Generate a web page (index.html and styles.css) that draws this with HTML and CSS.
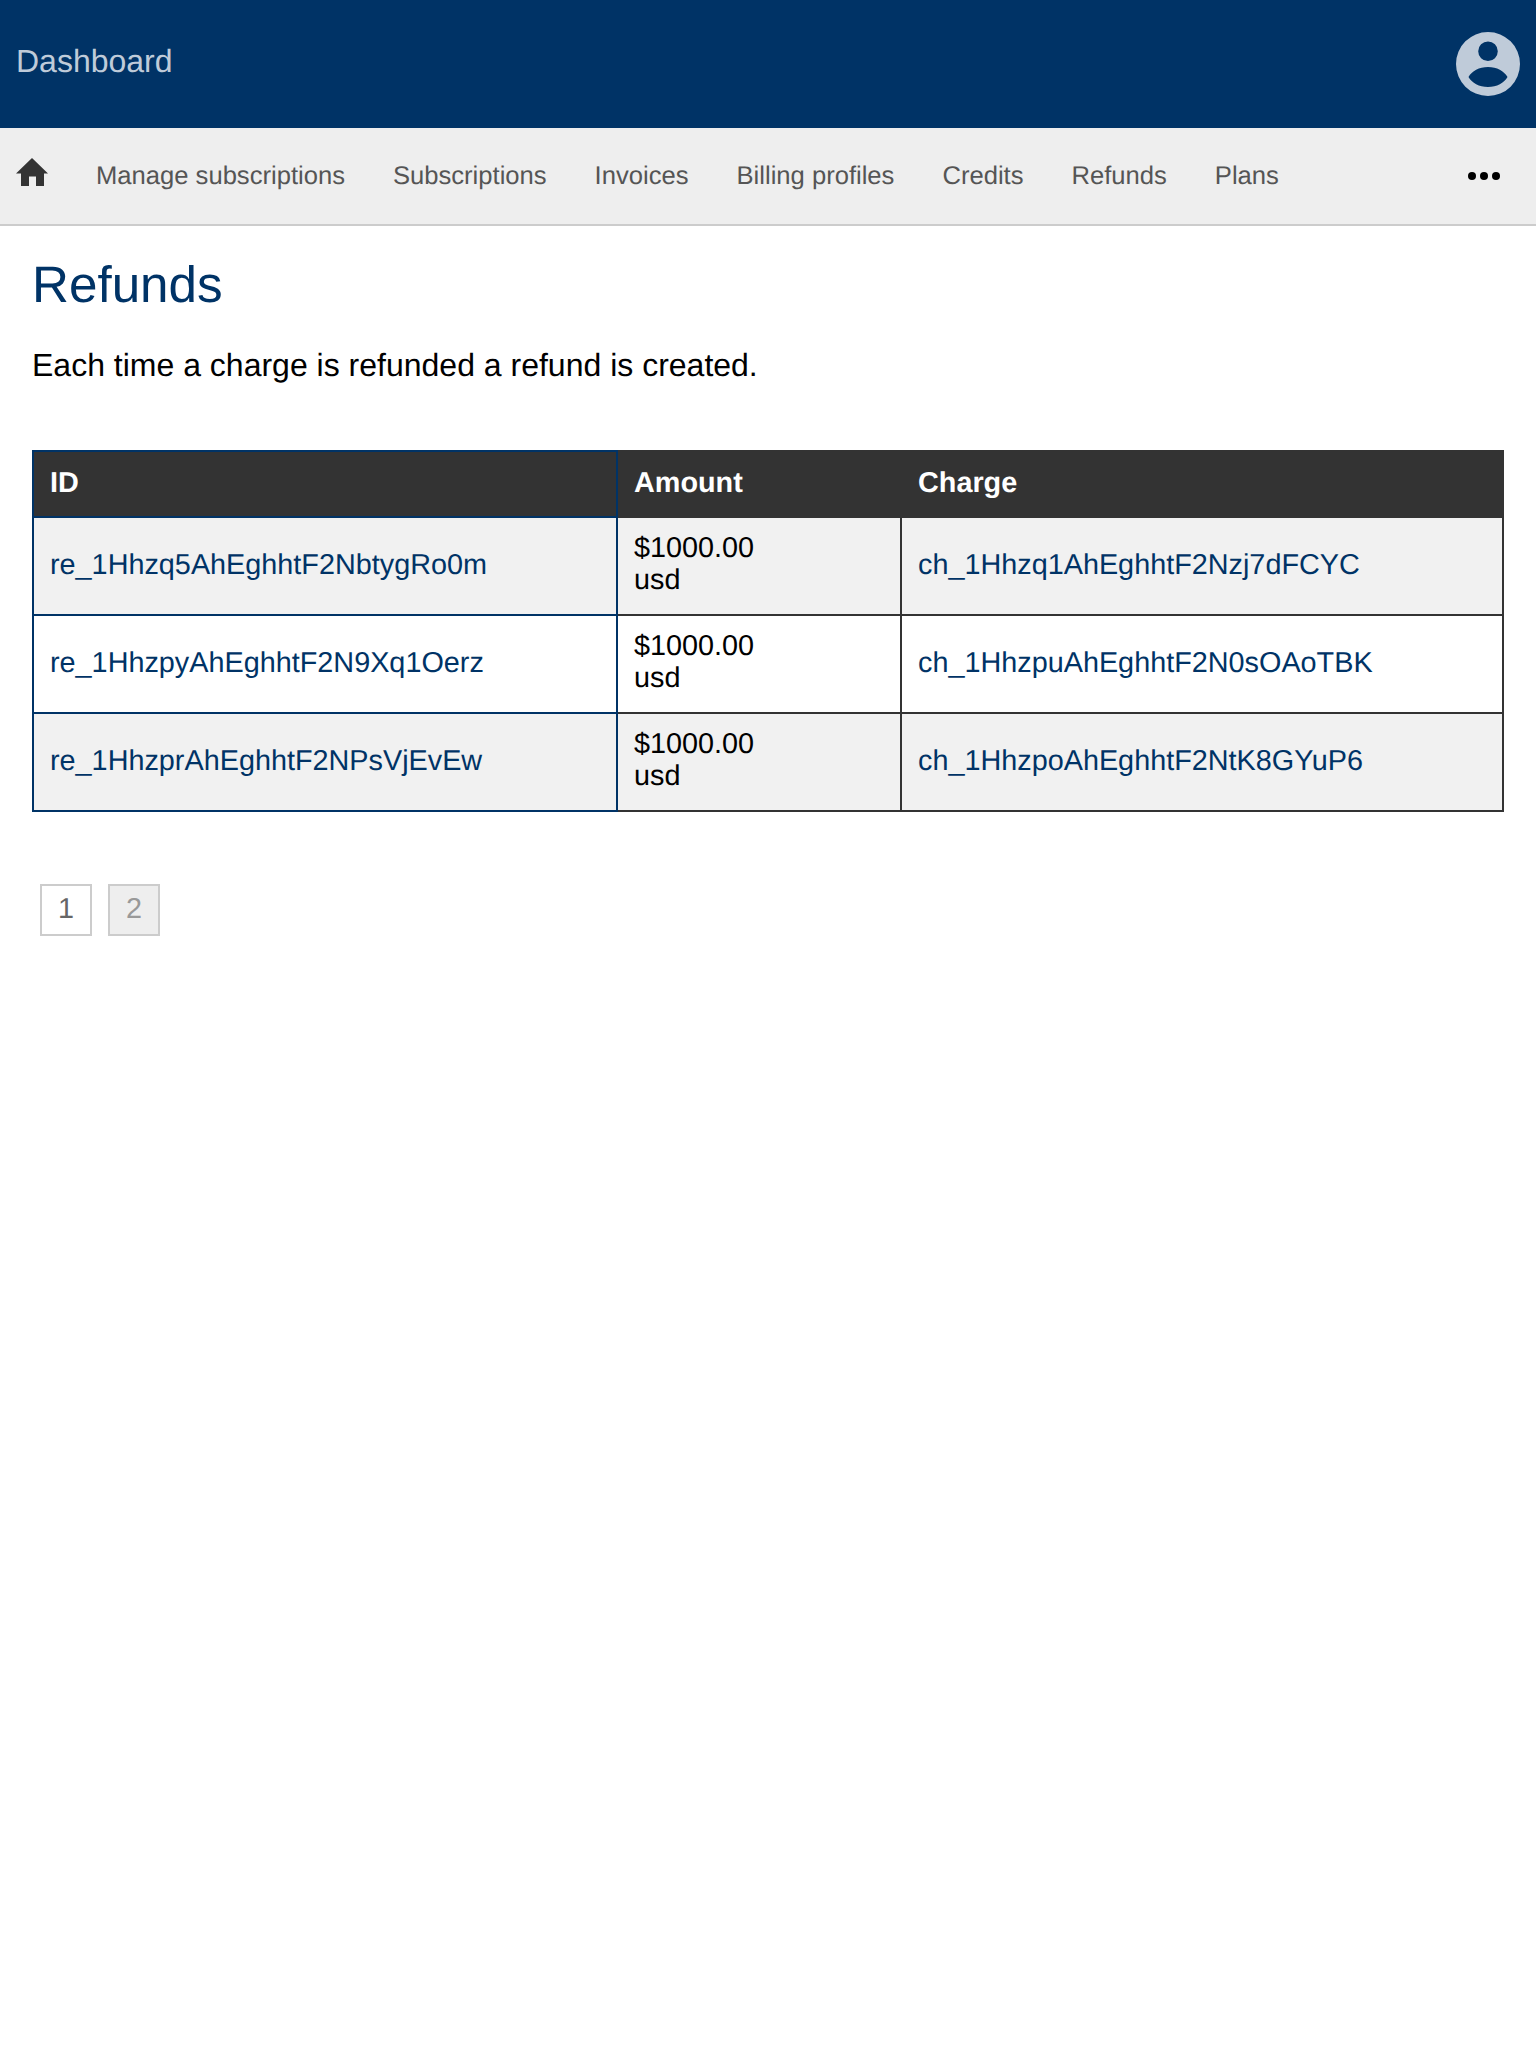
FILE: index.html

```html
<!DOCTYPE html>
<html lang="en">
<head>
  <meta charset="UTF-8">
  <title>Refunds</title>
  <link rel="stylesheet" href="styles.css">
</head>
<body>
  <header class="topbar">
    <a class="brand" href="#">Dashboard</a>
    <svg class="avatar" viewBox="0 0 64 64" width="64" height="64">
      <path fill="#bfcbd9" fill-rule="evenodd" d="M32 0a32 32 0 1 0 0 64a32 32 0 1 0 0-64zM32 9.500a9.800 9.800 0 1 1 0 19.600a9.800 9.800 0 1 1 0-19.600zM32 35c9 0 16 4 19.500 10c-3.500 6-10.500 10-19.500 10s-16-4-19.500-10c3.500-6 10.500-10 19.500-10z"/>
    </svg>
  </header>
  <nav class="tabs">
    <a class="home" href="#">
      <svg viewBox="0 0 32 28" width="32" height="28"><path fill="#333" d="M16 0L32 15.500H28V28H20V18.500H13V28H5V15.500H0z"/></svg>
    </a>
    <a href="#">Manage subscriptions</a>
    <a href="#">Subscriptions</a>
    <a href="#">Invoices</a>
    <a href="#">Billing profiles</a>
    <a href="#">Credits</a>
    <a href="#">Refunds</a>
    <a href="#">Plans</a>
    <div class="more"><span></span><span></span><span></span></div>
  </nav>
  <main>
    <h1>Refunds</h1>
    <p class="intro">Each time a charge is refunded a refund is created.</p>
    <table>
      <thead>
        <tr><th class="col-id">ID</th><th class="col-amount">Amount</th><th>Charge</th></tr>
      </thead>
      <tbody>
        <tr>
          <td class="col-id"><a href="#">re_1Hhzq5AhEghhtF2NbtygRo0m</a></td>
          <td class="amount">$1000.00<br>usd</td>
          <td><a href="#">ch_1Hhzq1AhEghhtF2Nzj7dFCYC</a></td>
        </tr>
        <tr>
          <td class="col-id"><a href="#">re_1HhzpyAhEghhtF2N9Xq1Oerz</a></td>
          <td class="amount">$1000.00<br>usd</td>
          <td><a href="#">ch_1HhzpuAhEghhtF2N0sOAoTBK</a></td>
        </tr>
        <tr>
          <td class="col-id"><a href="#">re_1HhzprAhEghhtF2NPsVjEvEw</a></td>
          <td class="amount">$1000.00<br>usd</td>
          <td><a href="#">ch_1HhzpoAhEghhtF2NtK8GYuP6</a></td>
        </tr>
      </tbody>
    </table>
    <div class="pager">
      <a href="#">1</a>
      <span class="current">2</span>
    </div>
  </main>
</body>
</html>
```

FILE: styles.css

```css
* { box-sizing: border-box; }
body {
  margin: 0;
  font-family: "Liberation Sans", Arial, sans-serif;
  color: #000;
  background: #fff;
  text-rendering: geometricPrecision;
}
a { text-decoration: none; }

.topbar {
  height: 128px;
  background: #003366;
  display: flex;
  align-items: center;
  justify-content: space-between;
  padding: 0 16px;
}
.brand {
  font-size: 32px;
  color: #bfcbd9;
  margin-top: -6px;
}
.avatar { display: block; }

.tabs {
  height: 98px;
  background: #eeeeee;
  border-bottom: 2px solid #cccccc;
  display: flex;
  align-items: center;
  gap: 48px;
  padding: 0 36px 0 16px;
  font-size: 25.600px;
}
.tabs a { color: #555555; }
.tabs .home { display: block; margin-top: -9px; }
.home svg { display: block; }
.more {
  margin-left: auto;
  display: flex;
  gap: 4px;
}
.more span {
  width: 8px;
  height: 8px;
  border-radius: 50%;
  background: #000;
}

main { padding: 0 32px; }
h1 {
  margin: 30px 0 0;
  font-size: 51.200px;
  font-weight: normal;
  line-height: 58px;
  color: #003366;
}
.intro {
  margin: 32px 0 0;
  font-size: 32px;
  line-height: 38px;
}

table {
  width: 100%;
  margin-top: 66px;
  border-collapse: collapse;
  font-size: 28.800px;
  line-height: 32px;
  table-layout: fixed;
}
th, td {
  border: 2px solid #333333;
  padding: 0 16px 3px;
  text-align: left;
}
th {
  height: 66px;
  background: #333333;
  color: #fff;
  font-weight: bold;
}
td { height: 98px; }
td.amount { padding-bottom: 4px; }
tbody tr:nth-child(odd) td { background: #f1f1f1; }
.col-id { width: 584px; border-color: #003366; }
.col-amount { width: 284px; }
td a { color: #003366; }

.pager {
  display: flex;
  gap: 16px;
  margin: 72px 0 0 8px;
}
.pager a, .pager span {
  width: 52px;
  height: 52px;
  border: 2px solid #cccccc;
  padding-bottom: 2px;
  display: flex;
  align-items: center;
  justify-content: center;
  font-size: 28.800px;
  color: #666666;
}
.pager .current {
  background: #eeeeee;
  color: #999999;
}
```
